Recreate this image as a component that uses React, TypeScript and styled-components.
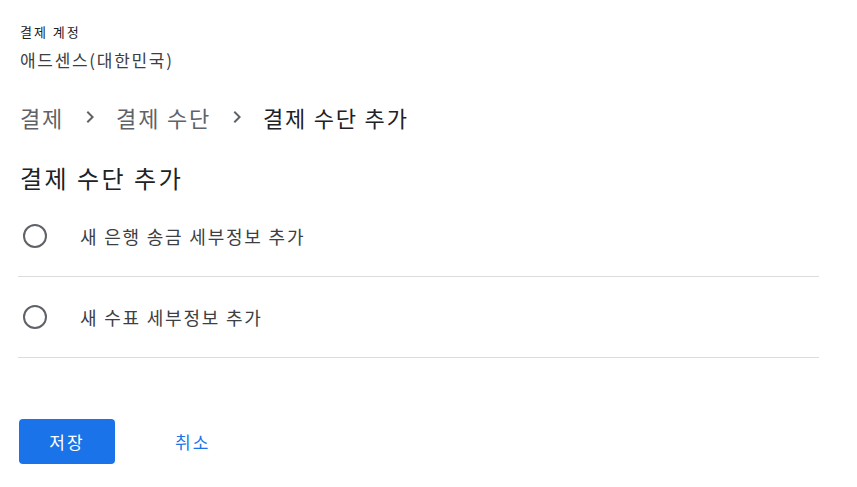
import React, { useState } from 'react';
import styled, { createGlobalStyle } from 'styled-components';

const GlobalStyle = createGlobalStyle`
  html, body {
    margin: 0;
    padding: 0;
    background: #fff;
    font-family: "Noto Sans CJK KR", "Noto Sans", Roboto, sans-serif;
  }
`;

const S = {
  Page: styled.div`
    padding: 22px 38px 0 18px;
    width: 801px;
  `,
  Account: styled.div`
    padding-left: 2px;
  `,
  AccountLabel: styled.div`
    font-size: 13px;
    line-height: 20px;
    letter-spacing: 2px;
    color: #202124;
  `,
  AccountName: styled.div`
    margin-top: 5px;
    font-size: 17px;
    line-height: 26px;
    letter-spacing: 1.7px;
    color: #3c4043;
  `,
  Crumbs: styled.nav`
    display: flex;
    align-items: center;
    gap: 14px;
    margin-top: 27px;
    padding-left: 2px;
    height: 34px;
  `,
  Crumb: styled.span<{ $current?: boolean }>`
    font-size: 22px;
    letter-spacing: 1.8px;
    color: ${(p) => (p.$current ? '#202124' : '#5f6368')};
  `,
  Chevron: styled.svg`
    width: 24px;
    height: 24px;
    fill: #5f6368;
  `,
  Heading: styled.h2`
    margin: 28px 0 0;
    padding-left: 2px;
    font-size: 24px;
    font-weight: 400;
    line-height: 32px;
    letter-spacing: 2.5px;
    color: #202124;
  `,
  Options: styled.div`
    margin-top: 2px;
  `,
  Option: styled.label`
    display: flex;
    align-items: center;
    height: 80px;
    border-bottom: 1px solid #dadce0;
    cursor: pointer;
  `,
  Radio: styled.span<{ $checked: boolean }>`
    box-sizing: border-box;
    width: 24px;
    height: 24px;
    margin-left: 5px;
    border-radius: 50%;
    border: 2px solid ${(p) => (p.$checked ? '#1a73e8' : '#5f6368')};
    display: flex;
    align-items: center;
    justify-content: center;
    &::after {
      content: '';
      width: 10px;
      height: 10px;
      border-radius: 50%;
      background: ${(p) => (p.$checked ? '#1a73e8' : 'transparent')};
    }
  `,
  OptionText: styled.span`
    margin-left: 33px;
    font-size: 18px;
    letter-spacing: 1.8px;
    color: #3c4043;
  `,
  Actions: styled.div`
    display: flex;
    align-items: center;
    margin-top: 61px;
    padding-left: 1px;
  `,
  Save: styled.button`
    width: 96px;
    height: 45px;
    border: none;
    border-radius: 4px;
    background: #1a73e8;
    color: #fff;
    font-family: inherit;
    font-size: 17px;
    letter-spacing: 2px;
    cursor: pointer;
  `,
  Cancel: styled.button`
    margin-left: 46px;
    padding: 0 14px;
    height: 45px;
    border: none;
    background: none;
    color: #1a73e8;
    font-family: inherit;
    font-size: 17px;
    letter-spacing: 2px;
    cursor: pointer;
  `,
};

const options = ['새 은행 송금 세부정보 추가', '새 수표 세부정보 추가'];

function Chevron() {
  return (
    <S.Chevron viewBox="0 0 24 24">
      <path d="M10 6 8.59 7.41 13.17 12l-4.58 4.59L10 18l6-6z" />
    </S.Chevron>
  );
}

export default function App() {
  const [selected, setSelected] = useState<number | null>(null);

  return (
    <>
      <GlobalStyle />
      <S.Page>
        <S.Account>
          <S.AccountLabel>결제 계정</S.AccountLabel>
          <S.AccountName>애드센스(대한민국)</S.AccountName>
        </S.Account>
        <S.Crumbs>
          <S.Crumb>결제</S.Crumb>
          <Chevron />
          <S.Crumb>결제 수단</S.Crumb>
          <Chevron />
          <S.Crumb $current>결제 수단 추가</S.Crumb>
        </S.Crumbs>
        <S.Heading>결제 수단 추가</S.Heading>
        <S.Options>
          {options.map((text, i) => (
            <S.Option key={text} onClick={() => setSelected(i)}>
              <S.Radio $checked={selected === i} />
              <S.OptionText>{text}</S.OptionText>
            </S.Option>
          ))}
        </S.Options>
        <S.Actions>
          <S.Save>저장</S.Save>
          <S.Cancel>취소</S.Cancel>
        </S.Actions>
      </S.Page>
    </>
  );
}
